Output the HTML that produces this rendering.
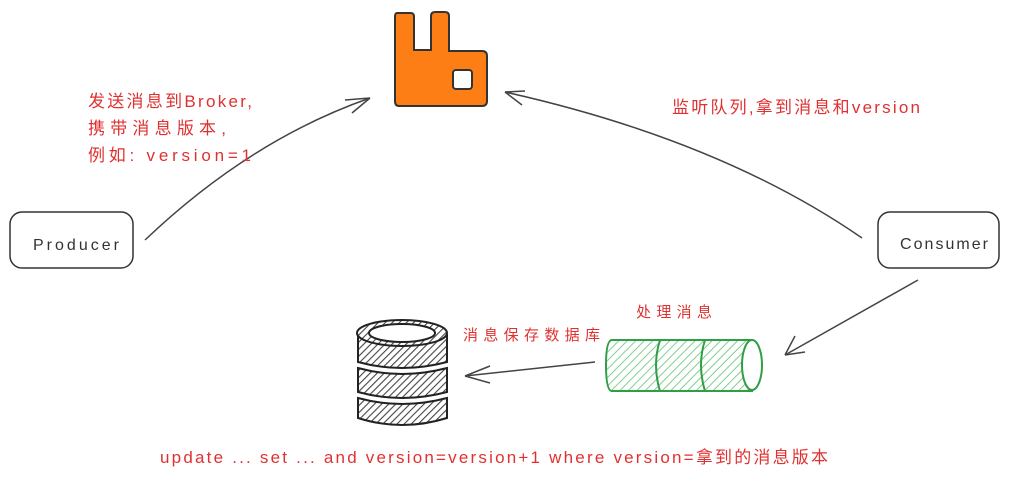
<!DOCTYPE html>
<html><head><meta charset="utf-8"><style>
body{margin:0;background:#fff}
svg{display:block}
text{font-family:"Liberation Sans","Noto Sans CJK SC",sans-serif;fill:#e03131;font-size:17px}
</style></head><body>
<svg width="1010" height="477" viewBox="0 0 1010 477" xmlns="http://www.w3.org/2000/svg">
<defs>
<pattern id="hk" width="5" height="5" patternUnits="userSpaceOnUse" patternTransform="rotate(45)"><rect width="5" height="5" fill="#fff"/><line x1="0" y1="0" x2="0" y2="5" stroke="#444" stroke-width="2.2"/></pattern>
<pattern id="hg" width="6" height="6" patternUnits="userSpaceOnUse" patternTransform="rotate(45)"><rect width="6" height="6" fill="#fff"/><line x1="0" y1="0" x2="0" y2="6" stroke="#7fcf8f" stroke-width="2"/></pattern>
</defs>
<path d="M397 13 H411 Q414 13 414 17 V50 H431 V16 Q431 12 435 12 H445 Q449 12 449 16 V51 H482 Q487 51 487 56 V101 Q487 106 482 106 H399 Q395 106 395 101 V17 Q395 13 397 13Z" fill="#fd7e14" stroke="#333" stroke-width="2"/>
<rect x="453" y="70" width="19" height="19" rx="3" fill="#fff" stroke="#333" stroke-width="2"/>
<rect x="10" y="212" width="123" height="56" rx="12" fill="#fff" stroke="#333" stroke-width="1.5"/>
<text x="33" y="250" textLength="86" style="fill:#333;font-size:16px">Producer</text>
<rect x="878" y="212" width="121" height="56" rx="12" fill="#fff" stroke="#333" stroke-width="1.5"/>
<text x="900" y="249" textLength="88" style="fill:#333;font-size:16px">Consumer</text>
<g fill="none" stroke="#444" stroke-width="1.5">
<path d="M145 240 Q250 140 370 98"/><path d="M370 98 L345 100 M370 98 L352 113"/>
<path d="M862 238 Q720 140 505 92"/><path d="M505 92 L525 91 M505 92 L522 105"/>
<path d="M918 280 L785 355"/><path d="M785 355 L795 336 M785 355 L805 352"/>
<path d="M595 362 L465 376"/><path d="M465 376 L490 366 M465 376 L490 383"/>
</g>
<g stroke="#222" stroke-width="2">
<path d="M358 398 V418 Q402 432 447 418 V398 Q402 410 358 398Z" fill="url(#hk)"/>
<path d="M358 368 V392 Q402 404 447 392 V368 Q402 380 358 368Z" fill="url(#hk)"/>
<path d="M358 335 V362 Q402 374 447 362 V335Z" fill="url(#hk)"/>
<ellipse cx="402" cy="333" rx="45" ry="13" fill="url(#hk)"/>
<ellipse cx="402" cy="333" rx="33" ry="9" fill="#fff"/>
</g>
<g stroke="#2f9e44" stroke-width="2">
<path d="M612 340 H752 V391 H612 Q606 391 606 365 Q606 340 612 340Z" fill="url(#hg)"/>
<path d="M660 340 Q652 365 660 391 M705 340 Q697 365 705 391" fill="none"/>
<ellipse cx="752" cy="365" rx="10" ry="25" fill="#fff"/>
</g>
<text x="88" y="107" textLength="164">发送消息到Broker,</text>
<text x="88" y="134" textLength="138">携带消息版本,</text>
<text x="88" y="161" textLength="163">例如: version=1</text>
<text x="672" y="113" textLength="248">监听队列,拿到消息和version</text>
<text x="636" y="317" textLength="76" style="font-size:15px">处理消息</text>
<text x="463" y="340" textLength="137" style="font-size:15px">消息保存数据库</text>
<text x="160" y="463" textLength="668">update ... set ... and version=version+1 where version=拿到的消息版本</text>
</svg>
</body></html>
